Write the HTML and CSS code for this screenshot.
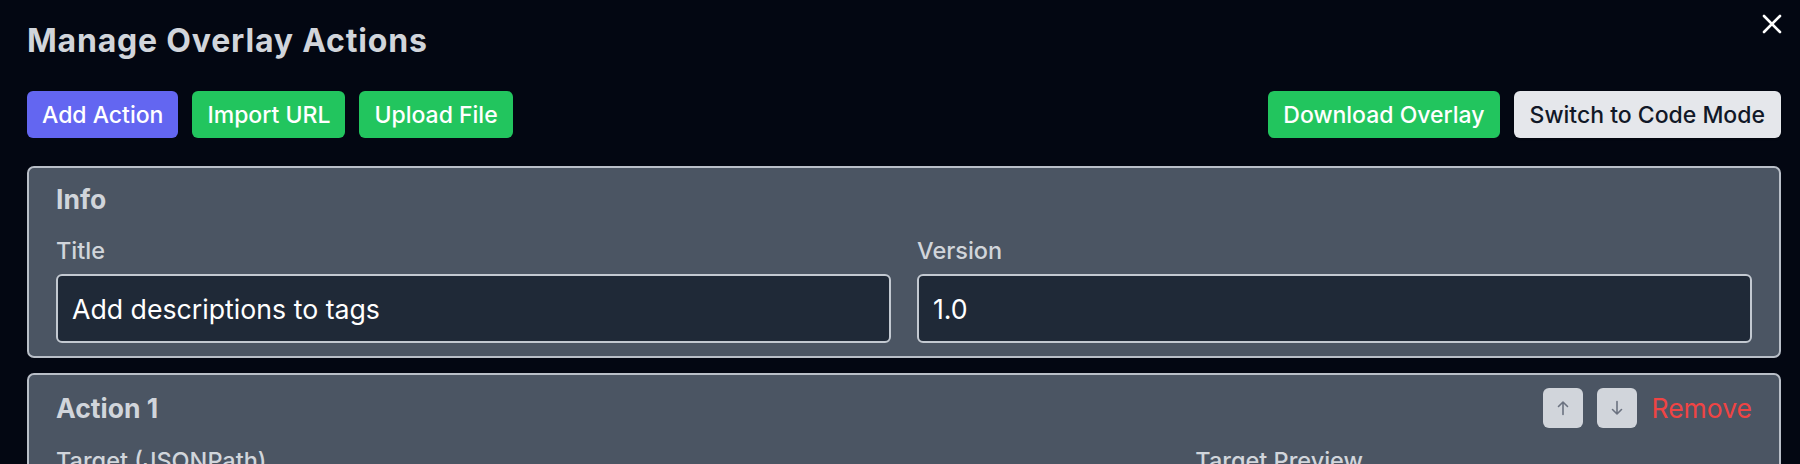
FILE: index.html
```html
<!DOCTYPE html>
<html lang="en">
<head>
<meta charset="utf-8">
<title>Manage Overlay Actions</title>
<link rel="stylesheet" href="styles.css">
</head>
<body>
<div class="modal">
  <button class="close" aria-label="Close">
    <svg viewBox="0 0 20 20" width="20" height="20"><path d="M2 2 L18 18 M18 2 L2 18" stroke="#ffffff" stroke-width="2.6" stroke-linecap="round" fill="none"/></svg>
  </button>
  <h1 class="heading">Manage Overlay Actions</h1>
  <div class="toolbar">
    <div class="group">
      <button class="btn btn-indigo">Add Action</button>
      <button class="btn btn-green">Import URL</button>
      <button class="btn btn-green">Upload File</button>
    </div>
    <div class="group">
      <button class="btn btn-green">Download Overlay</button>
      <button class="btn btn-light">Switch to Code Mode</button>
    </div>
  </div>

  <section class="card">
    <h2 class="card-title">Info</h2>
    <div class="grid-2">
      <div class="field">
        <label class="label">Title</label>
        <input class="input" type="text" value="Add descriptions to tags">
      </div>
      <div class="field">
        <label class="label">Version</label>
        <input class="input" type="text" value="1.0">
      </div>
    </div>
  </section>

  <section class="card card-action">
    <div class="card-head">
      <h2 class="card-title">Action 1</h2>
      <div class="head-actions">
        <button class="move" aria-label="Move up">
          <svg viewBox="0 0 14 16" width="14" height="16"><path d="M7 14.5 V2 M2.5 6.5 L7 2 L11.5 6.5" stroke="#6b7280" stroke-width="1.6" fill="none" stroke-linecap="round" stroke-linejoin="round"/></svg>
        </button>
        <button class="move" aria-label="Move down">
          <svg viewBox="0 0 14 16" width="14" height="16"><path d="M7 1.5 V14 M2.5 9.5 L7 14 L11.5 9.5" stroke="#6b7280" stroke-width="1.6" fill="none" stroke-linecap="round" stroke-linejoin="round"/></svg>
        </button>
        <button class="remove">Remove</button>
      </div>
    </div>
    <div class="grid-3">
      <label class="label">Target (JSONPath)</label>
      <label class="label">Target Preview</label>
    </div>
  </section>
</div>
</body>
</html>
```

FILE: styles.css
```css
* { box-sizing: border-box; }

html, body {
  margin: 0;
  height: 464px;
  overflow: hidden;
}

body {
  background: #030712;
  font-family: Inter, "Noto Sans", "Liberation Sans", sans-serif;
  color: #d1d5db;
}

.modal {
  position: relative;
  padding: 22px 19px 0 27px;
}

.close {
  position: absolute;
  top: 14px;
  right: 18px;
  width: 20px;
  height: 20px;
  padding: 0;
  border: 0;
  background: transparent;
  display: flex;
}

.heading {
  margin: 0;
  font-size: 32px;
  line-height: 37px;
  font-weight: 700;
  letter-spacing: 0.8px;
  color: #d1d5db;
}

.toolbar {
  display: flex;
  justify-content: space-between;
  margin-top: 32px;
}

.group {
  display: flex;
  gap: 14px;
}

.btn {
  height: 47px;
  padding: 0 15px;
  border: 0;
  border-radius: 6px;
  font-family: inherit;
  font-size: 23px;
  font-weight: 500;
  color: #ffffff;
}

.btn-indigo { background: #6366f1; }
.btn-green { background: #22c55e; }
.btn-light {
  background: #e5e7eb;
  color: #111827;
  padding: 0 16px;
  box-shadow: 0 1px 2px rgba(0, 0, 0, 0.3);
}

.card {
  margin-top: 28px;
  background: #4b5563;
  border: 2px solid #b9bfc8;
  border-radius: 7px;
  padding: 15px 27px 13px 27px;
}

.card-action {
  margin-top: 15px;
  padding-top: 13px;
  padding-bottom: 40px;
}

.card-title {
  margin: 0 0 21px 0;
  font-size: 26.5px;
  line-height: 32px;
  font-weight: 700;
  color: #d1d5db;
}

.card-head {
  display: flex;
  align-items: center;
  justify-content: space-between;
  height: 40px;
  margin-bottom: 18px;
}

.card-head .card-title { margin: 0; }

.head-actions {
  display: flex;
  align-items: center;
  gap: 14px;
}

.move {
  width: 40px;
  height: 40px;
  padding: 0;
  border: 0;
  border-radius: 6px;
  background: #d1d5db;
  display: flex;
  align-items: center;
  justify-content: center;
}

.remove {
  padding: 0;
  border: 0;
  background: transparent;
  font-family: inherit;
  font-size: 26.5px;
  font-weight: 400;
  color: #ef4444;
}

.grid-2 {
  display: grid;
  grid-template-columns: 1fr 1fr;
  gap: 26px;
}

.grid-3 {
  display: grid;
  grid-template-columns: 2fr 1fr;
  gap: 26px;
}

.label {
  display: block;
  margin-bottom: 9px;
  font-size: 23.5px;
  line-height: 29px;
  font-weight: 500;
  color: #d1d5db;
}

.input {
  display: block;
  width: 100%;
  height: 69px;
  padding: 0 14px;
  border: 2px solid #c3c9d1;
  border-radius: 6px;
  background: #1f2937;
  font-family: inherit;
  font-size: 26.7px;
  color: #ffffff;
  outline: none;
}
```
